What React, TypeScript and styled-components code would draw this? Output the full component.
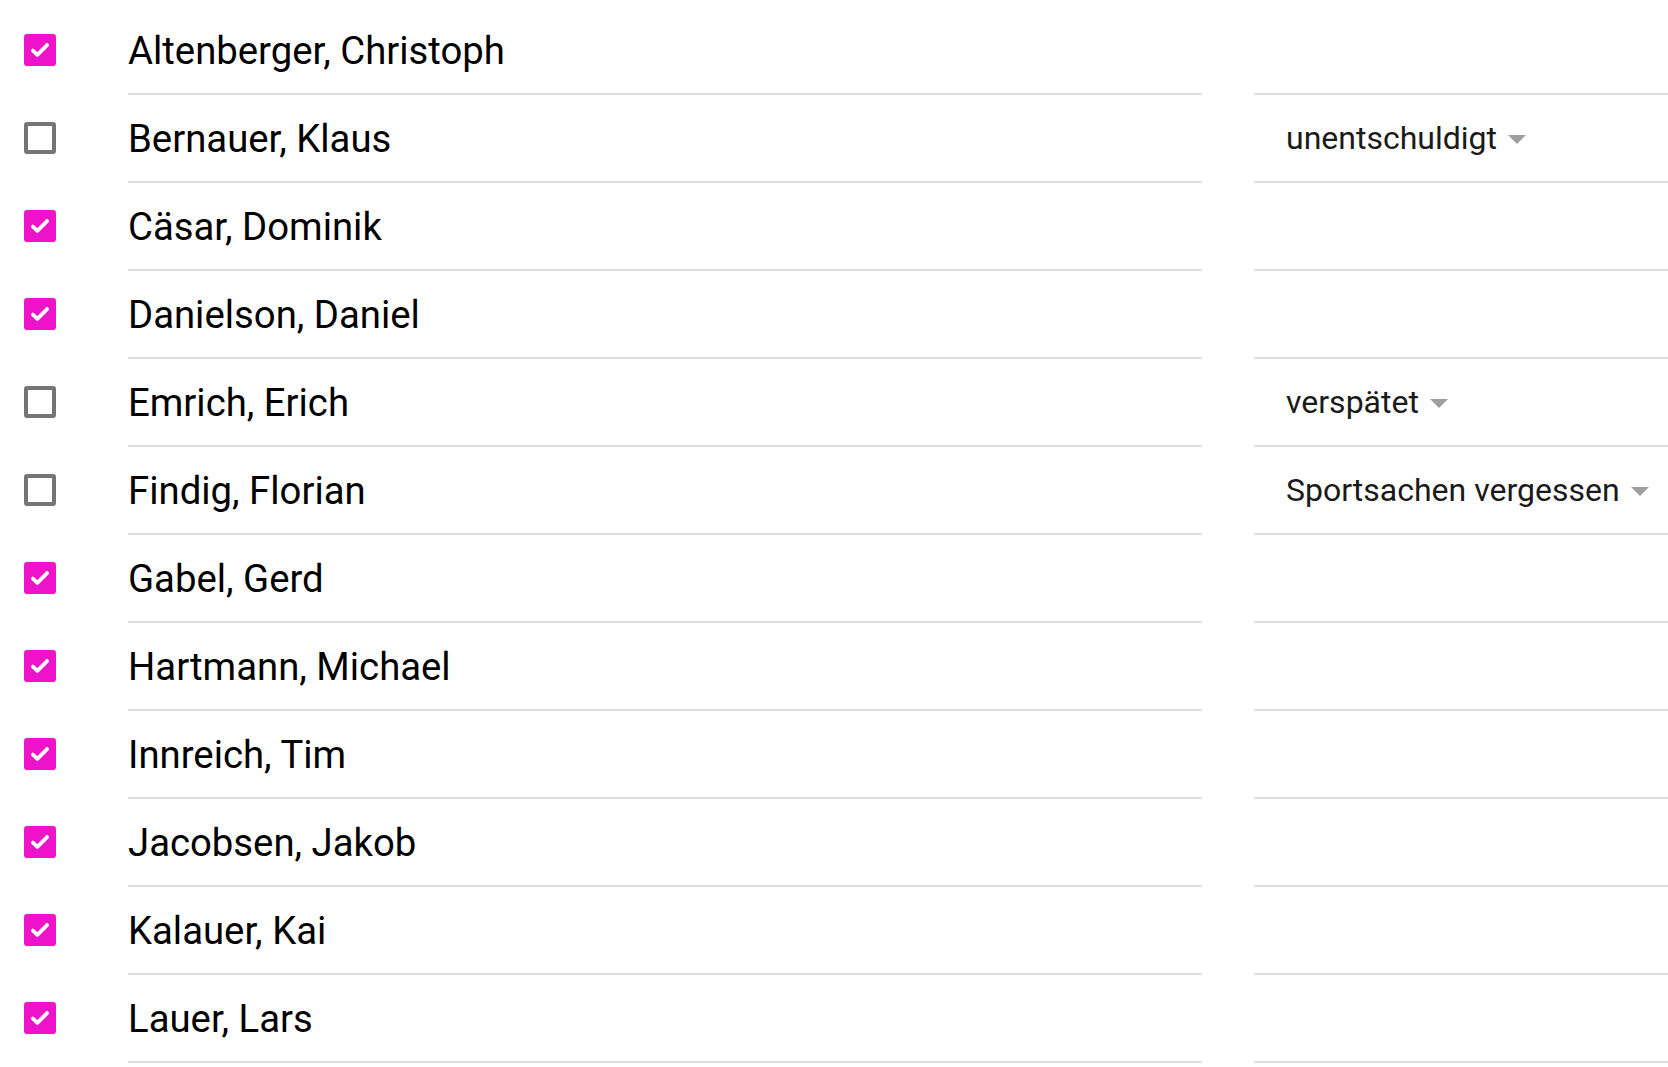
import React from "react";
import styled, { createGlobalStyle } from "styled-components";

type Student = {
  name: string;
  present: boolean;
  reason?: string;
};

const students: Student[] = [
  { name: "Altenberger, Christoph", present: true },
  { name: "Bernauer, Klaus", present: false, reason: "unentschuldigt" },
  { name: "Cäsar, Dominik", present: true },
  { name: "Danielson, Daniel", present: true },
  { name: "Emrich, Erich", present: false, reason: "verspätet" },
  { name: "Findig, Florian", present: false, reason: "Sportsachen vergessen" },
  { name: "Gabel, Gerd", present: true },
  { name: "Hartmann, Michael", present: true },
  { name: "Innreich, Tim", present: true },
  { name: "Jacobsen, Jakob", present: true },
  { name: "Kalauer, Kai", present: true },
  { name: "Lauer, Lars", present: true },
];

const App = () => {
  return (
    <>
      <GlobalStyle />
      <List>
        {students.map((s) => (
          <Row key={s.name}>
            <CheckCell>
              <Checkbox checked={s.present}>
                {s.present && (
                  <svg width="26" height="26" viewBox="0 0 24 24">
                    <path
                      d="M5.5 12.5l4 4L18.5 7.5"
                      fill="none"
                      stroke="#fff"
                      strokeWidth="3.6"
                      strokeLinecap="round"
                      strokeLinejoin="round"
                    />
                  </svg>
                )}
              </Checkbox>
            </CheckCell>
            <NameCell>{s.name}</NameCell>
            <Spacer />
            <ReasonCell>
              {s.reason && (
                <Select>
                  {s.reason}
                  <Arrow />
                </Select>
              )}
            </ReasonCell>
          </Row>
        ))}
      </List>
    </>
  );
};

export default App;

const GlobalStyle = createGlobalStyle`
  html, body {
    margin: 0;
    padding: 0;
    background: #ffffff;
    font-family: Roboto, "Noto Sans", sans-serif;
    overflow: hidden;
  }
`;

const List = styled.div`
  display: flex;
  flex-direction: column;
  padding-top: 7px;
  width: 1668px;
`;

const Row = styled.div`
  display: grid;
  grid-template-columns: 128px 1074px 52px 1fr;
  height: 88px;
`;

const CheckCell = styled.div`
  display: flex;
  align-items: center;
  padding-left: 24px;
  padding-bottom: 2px;
`;

const Checkbox = styled.div<{ checked: boolean }>`
  width: 32px;
  height: 32px;
  box-sizing: border-box;
  border-radius: 3px;
  display: flex;
  align-items: center;
  justify-content: center;
  background: ${(p) => (p.checked ? "#ee12c9" : "transparent")};
  border: ${(p) => (p.checked ? "none" : "4px solid #757575")};
`;

const NameCell = styled.div`
  display: flex;
  align-items: center;
  border-bottom: 2px solid #dfdfdf;
  font-size: 38.3px;
  color: #000;
`;

const Spacer = styled.div``;

const ReasonCell = styled.div`
  display: flex;
  align-items: center;
  border-bottom: 2px solid #dfdfdf;
  padding-left: 32px;
`;

const Select = styled.div`
  display: flex;
  align-items: center;
  gap: 11px;
  font-size: 32px;
  color: #1a1a1a;
`;

const Arrow = styled.span`
  width: 0;
  height: 0;
  border-left: 9px solid transparent;
  border-right: 9px solid transparent;
  border-top: 9px solid #9e9e9e;
  margin-top: 2px;
`;
